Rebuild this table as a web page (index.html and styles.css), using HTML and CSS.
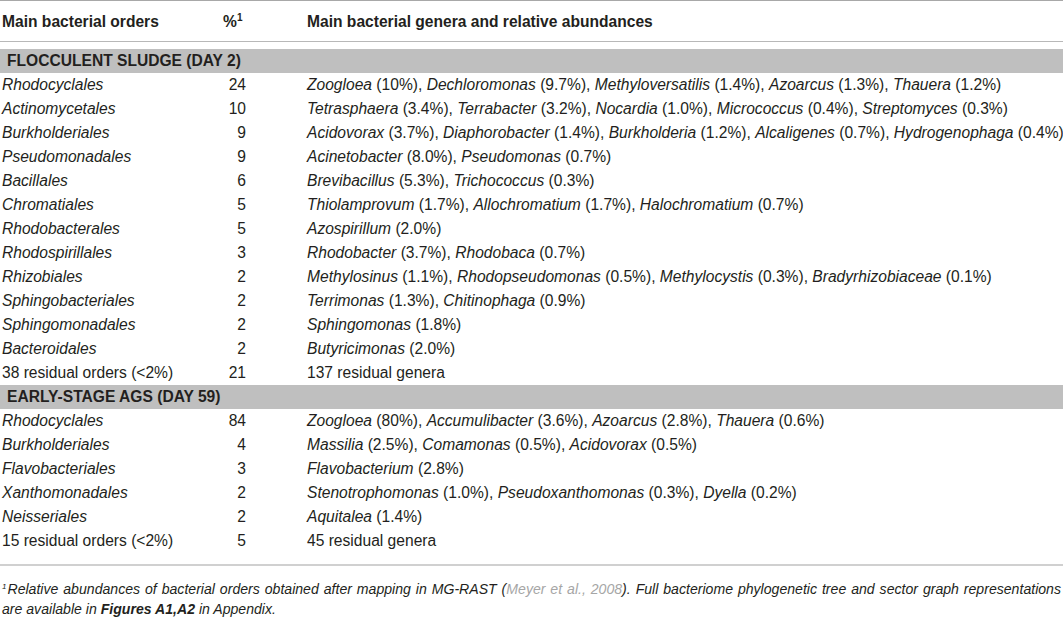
FILE: index.html
```html
<!DOCTYPE html>
<html>
<head>
<meta charset="utf-8">
<link rel="stylesheet" href="styles.css">
</head>
<body>
<div class="table">
  <div class="row head">
    <div class="c1">Main bacterial orders</div>
    <div class="c2">%<sup>1</sup></div>
    <div class="c3">Main bacterial genera and relative abundances</div>
  </div>
  <div class="band">FLOCCULENT SLUDGE (DAY 2)</div>
  <div class="row"><div class="c1"><i>Rhodocyclales</i></div><div class="c2">24</div><div class="c3"><i>Zoogloea</i> (10%), <i>Dechloromonas</i> (9.7%), <i>Methyloversatilis</i> (1.4%), <i>Azoarcus</i> (1.3%), <i>Thauera</i> (1.2%)</div></div>
  <div class="row"><div class="c1"><i>Actinomycetales</i></div><div class="c2">10</div><div class="c3"><i>Tetrasphaera</i> (3.4%), <i>Terrabacter</i> (3.2%), <i>Nocardia</i> (1.0%), <i>Micrococcus</i> (0.4%), <i>Streptomyces</i> (0.3%)</div></div>
  <div class="row"><div class="c1"><i>Burkholderiales</i></div><div class="c2">9</div><div class="c3"><i>Acidovorax</i> (3.7%), <i>Diaphorobacter</i> (1.4%), <i>Burkholderia</i> (1.2%), <i>Alcaligenes</i> (0.7%), <i>Hydrogenophaga</i> (0.4%)</div></div>
  <div class="row"><div class="c1"><i>Pseudomonadales</i></div><div class="c2">9</div><div class="c3"><i>Acinetobacter</i> (8.0%), <i>Pseudomonas</i> (0.7%)</div></div>
  <div class="row"><div class="c1"><i>Bacillales</i></div><div class="c2">6</div><div class="c3"><i>Brevibacillus</i> (5.3%), <i>Trichococcus</i> (0.3%)</div></div>
  <div class="row"><div class="c1"><i>Chromatiales</i></div><div class="c2">5</div><div class="c3"><i>Thiolamprovum</i> (1.7%), <i>Allochromatium</i> (1.7%), <i>Halochromatium</i> (0.7%)</div></div>
  <div class="row"><div class="c1"><i>Rhodobacterales</i></div><div class="c2">5</div><div class="c3"><i>Azospirillum</i> (2.0%)</div></div>
  <div class="row"><div class="c1"><i>Rhodospirillales</i></div><div class="c2">3</div><div class="c3"><i>Rhodobacter</i> (3.7%), <i>Rhodobaca</i> (0.7%)</div></div>
  <div class="row"><div class="c1"><i>Rhizobiales</i></div><div class="c2">2</div><div class="c3"><i>Methylosinus</i> (1.1%), <i>Rhodopseudomonas</i> (0.5%), <i>Methylocystis</i> (0.3%), <i>Bradyrhizobiaceae</i> (0.1%)</div></div>
  <div class="row"><div class="c1"><i>Sphingobacteriales</i></div><div class="c2">2</div><div class="c3"><i>Terrimonas</i> (1.3%), <i>Chitinophaga</i> (0.9%)</div></div>
  <div class="row"><div class="c1"><i>Sphingomonadales</i></div><div class="c2">2</div><div class="c3"><i>Sphingomonas</i> (1.8%)</div></div>
  <div class="row"><div class="c1"><i>Bacteroidales</i></div><div class="c2">2</div><div class="c3"><i>Butyricimonas</i> (2.0%)</div></div>
  <div class="row"><div class="c1">38 residual orders (&lt;2%)</div><div class="c2">21</div><div class="c3">137 residual genera</div></div>
  <div class="band">EARLY-STAGE AGS (DAY 59)</div>
  <div class="row"><div class="c1"><i>Rhodocyclales</i></div><div class="c2">84</div><div class="c3"><i>Zoogloea</i> (80%), <i>Accumulibacter</i> (3.6%), <i>Azoarcus</i> (2.8%), <i>Thauera</i> (0.6%)</div></div>
  <div class="row"><div class="c1"><i>Burkholderiales</i></div><div class="c2">4</div><div class="c3"><i>Massilia</i> (2.5%), <i>Comamonas</i> (0.5%), <i>Acidovorax</i> (0.5%)</div></div>
  <div class="row"><div class="c1"><i>Flavobacteriales</i></div><div class="c2">3</div><div class="c3"><i>Flavobacterium</i> (2.8%)</div></div>
  <div class="row"><div class="c1"><i>Xanthomonadales</i></div><div class="c2">2</div><div class="c3"><i>Stenotrophomonas</i> (1.0%), <i>Pseudoxanthomonas</i> (0.3%), <i>Dyella</i> (0.2%)</div></div>
  <div class="row"><div class="c1"><i>Neisseriales</i></div><div class="c2">2</div><div class="c3"><i>Aquitalea</i> (1.4%)</div></div>
  <div class="row last"><div class="c1">15 residual orders (&lt;2%)</div><div class="c2">5</div><div class="c3">45 residual genera</div></div>
</div>
<p class="foot"><sup>1</sup>Relative abundances of bacterial orders obtained after mapping in MG-RAST (<span class="ref">Meyer et al., 2008</span>). Full bacteriome phylogenetic tree and sector graph representations are available in <b>Figures A1,A2</b> in Appendix.</p>
</body>
</html>
```

FILE: styles.css
```css
html, body {
  margin: 0;
  padding: 0;
  background: #ffffff;
}
body {
  width: 1063px;
  font-family: "Liberation Sans", Arial, sans-serif;
  color: #231f20;
}
.table {
  border-top: 1px solid #a8a8a8;
  border-bottom: 2px solid #d0d0d0;
  padding-bottom: 11px;
}
.row {
  display: grid;
  grid-template-columns: 219px 27px 1fr;
  column-gap: 0;
  height: 24px;
  align-items: center;
  font-size: 15.6px;
  line-height: 24px;
  white-space: nowrap;
}
.c1 {
  padding-left: 2px;
}
.c2 {
  text-align: right;
}
.c3 {
  padding-left: 61px;
}
.head {
  height: 40px;
  line-height: 35px;
  font-weight: bold;
  border-bottom: 1px solid #b8b8b8;
  margin-bottom: 7px;
}
.head .c2 {
  text-align: left;
  padding-left: 4px;
}
.head sup {
  font-size: 10px;
  line-height: 0;
  vertical-align: 6px;
}
.band {
  background: #bfbfbf;
  height: 24px;
  line-height: 24px;
  font-size: 15.6px;
  font-weight: bold;
  padding-left: 7px;
}
.foot {
  margin: 13px 0 0 0;
  padding: 0 2px;
  font-size: 14.1px;
  font-style: italic;
  line-height: 20px;
  text-align: justify;
}
.foot sup {
  font-size: 8px;
  line-height: 0;
  vertical-align: 5px;
  margin-right: 1px;
}
.foot .ref {
  color: #a6a6a6;
}
.foot b {
  font-weight: bold;
}
```
